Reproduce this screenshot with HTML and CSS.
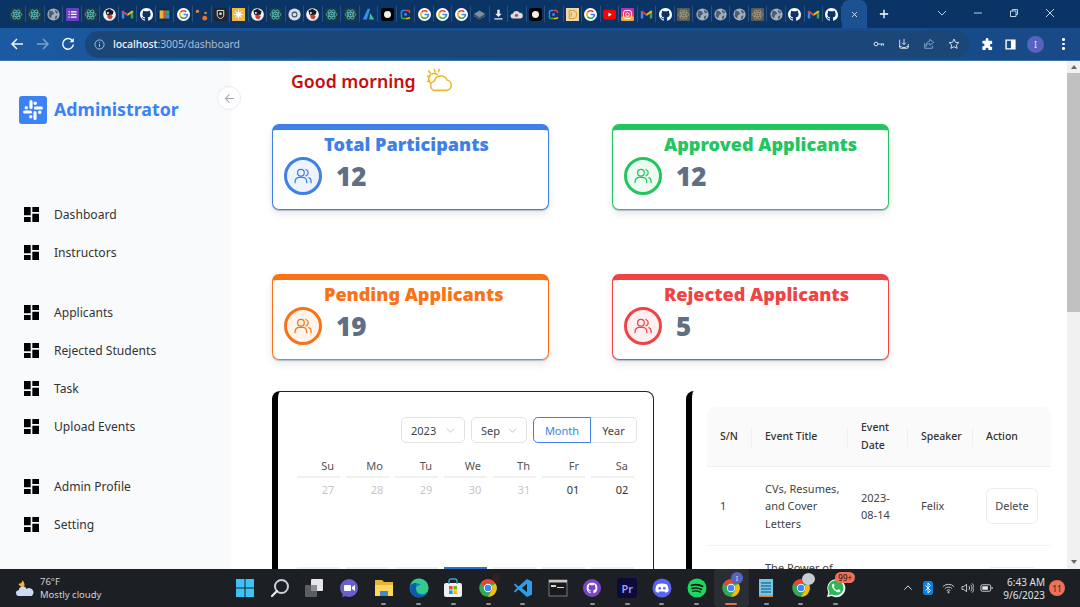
FILE: index.html
```html
<!DOCTYPE html>
<html lang="en">
<head>
<meta charset="utf-8">
<title>Dashboard</title>
<link rel="stylesheet" href="styles.css">
</head>
<body>
<svg class="defs" aria-hidden="true">
  <symbol id="react" viewBox="0 0 16 16"><rect width="16" height="16" rx="2" fill="#1d3a44"/><g fill="none" stroke="#5fc9c9" stroke-width=".9"><ellipse cx="8" cy="8" rx="6.5" ry="2.6"/><ellipse cx="8" cy="8" rx="6.5" ry="2.6" transform="rotate(60 8 8)"/><ellipse cx="8" cy="8" rx="6.5" ry="2.6" transform="rotate(120 8 8)"/></g><circle cx="8" cy="8" r="1.3" fill="#5fc9c9"/></symbol>
  <symbol id="reactg" viewBox="0 0 16 16"><rect width="16" height="16" rx="1" fill="#5b5a50"/><g fill="none" stroke="#a5a08f" stroke-width=".9"><ellipse cx="8" cy="8" rx="6.5" ry="2.6"/><ellipse cx="8" cy="8" rx="6.5" ry="2.6" transform="rotate(60 8 8)"/><ellipse cx="8" cy="8" rx="6.5" ry="2.6" transform="rotate(120 8 8)"/></g><circle cx="8" cy="8" r="1.3" fill="#a5a08f"/></symbol>
  <symbol id="globe" viewBox="0 0 16 16"><circle cx="8" cy="8" r="7.5" fill="#a6aeb8"/><path d="M3 3l4 1 2 3-3 2-1 4-3-3zM10 2l4 3-2 2-2-2zM10 10l3-1-1 4-2 1z" fill="#4a5d74"/></symbol>
  <symbol id="list" viewBox="0 0 16 16"><rect width="16" height="16" rx="1" fill="#6a3fc0"/><path d="M3 4h1.5v1.5H3zM6 4h7v1.5H6zM3 7.2h1.5v1.5H3zM6 7.2h7v1.5H6zM3 10.4h1.5v1.5H3zM6 10.4h7v1.5H6z" fill="#fff"/></symbol>
  <symbol id="manga" viewBox="0 0 16 16"><circle cx="8" cy="8" r="7.8" fill="#f4f2f0"/><path d="M3 3l5-2 5 3-1 4-4 1-4-1z" fill="#1c1a20"/><path d="M5 9l4-1 3 2-2 4-4-1z" fill="#c4453a"/><circle cx="6" cy="6" r="1.2" fill="#fff"/></symbol>
  <symbol id="gmail" viewBox="0 0 16 16"><path d="M1 13V4l3 2v7z" fill="#4285f4"/><path d="M15 13V4l-3 2v7z" fill="#34a853"/><path d="M1 4l1.500-1L8 7.200v2.500L1 5z" fill="#ea4335"/><path d="M15 4l-1.500-1L8 7.200v2.500L15 5z" fill="#fbbc05"/></symbol>
  <symbol id="github" viewBox="0 0 16 16"><path fill="#fff" d="M8 0C3.580 0 0 3.580 0 8c0 3.540 2.290 6.530 5.470 7.590.4.070.55-.17.55-.38 0-.19-.01-.82-.01-1.490-2.010.37-2.530-.49-2.690-.94-.09-.23-.48-.94-.82-1.130-.28-.15-.68-.52-.01-.53.63-.01 1.080.58 1.230.82.720 1.210 1.870.87 2.330.66.070-.52.280-.87.510-1.070-1.780-.2-3.640-.89-3.640-3.950 0-.87.310-1.590.820-2.150-.08-.2-.36-1.020.08-2.120 0 0 .67-.21 2.200.82.640-.18 1.320-.27 2-.27s1.360.09 2 .27c1.530-1.040 2.200-.82 2.200-.82.440 1.100.160 1.920.080 2.120.510.560.820 1.270.820 2.150 0 3.070-1.870 3.750-3.650 3.950.290.250.540.730.540 1.480 0 1.070-.01 1.930-.01 2.200 0 .210.150.460.550.380A8.010 8.010 0 0 0 16 8c0-4.420-3.580-8-8-8z"/></symbol>
  <symbol id="twob" viewBox="0 0 16 16"><rect width="16" height="16" rx="1" fill="#0e2f55"/><rect x="2" y="3" width="5" height="10" fill="#f2b632"/><rect x="7" y="3" width="3" height="10" fill="#e04f3c"/><rect x="10" y="3" width="4" height="5" fill="#3fa65a"/><rect x="10" y="8" width="4" height="5" fill="#3d8be0"/></symbol>
  <symbol id="google" viewBox="0 0 16 16"><circle cx="8" cy="8" r="8" fill="#fff"/><g fill="none" stroke-width="2.100"><path d="M11.500 4.700A4.800 4.800 0 0 0 4.400 5.200" stroke="#ea4335"/><path d="M4.400 5.200a4.800 4.800 0 0 0 0 5.600" stroke="#fbbc05"/><path d="M4.400 10.800a4.800 4.800 0 0 0 7.300 .3" stroke="#34a853"/><path d="M11.700 11.100A4.800 4.800 0 0 0 12.800 8H8" stroke="#4285f4"/></g></symbol>
  <symbol id="dots" viewBox="0 0 16 16"><circle cx="3" cy="4" r="2" fill="#f08a24"/><circle cx="13" cy="6" r="1.500" fill="#f08a24"/><circle cx="12" cy="12.500" r="3" fill="#f2701d"/></symbol>
  <symbol id="shield" viewBox="0 0 16 16"><rect width="16" height="16" rx="2" fill="#22262c"/><path d="M4 3h8v6c0 2-2 3.500-4 4-2-.5-4-2-4-4z" fill="none" stroke="#e8e4d8" stroke-width="1.200"/><circle cx="8" cy="7" r="1.600" fill="#e8e4d8"/></symbol>
  <symbol id="sun" viewBox="0 0 16 16"><rect width="16" height="16" fill="#f3b73b"/><circle cx="8" cy="8" r="3" fill="#fff"/><path d="M8 2v12M2 8h12M3.800 3.800l8.400 8.400M12.200 3.800l-8.400 8.400" stroke="#fff" stroke-width="1"/></symbol>
  <symbol id="chromew" viewBox="0 0 16 16"><circle cx="8" cy="8" r="7.500" fill="#d8dde2"/><circle cx="8" cy="8" r="3.600" fill="#37506e"/><circle cx="8" cy="8" r="2.300" fill="#d8dde2"/></symbol>
  <symbol id="aicon" viewBox="0 0 16 16"><path d="M7 1h3l-4 13H1z" fill="#3b8bea"/><path d="M10 6l5 8h-6z" fill="#35c6a8"/></symbol>
  <symbol id="dot" viewBox="0 0 16 16"><rect width="16" height="16" rx="3" fill="#000"/><circle cx="8" cy="8" r="4.300" fill="#f1efe8"/></symbol>
  <symbol id="lens" viewBox="0 0 16 16"><g fill="none" stroke-width="1.800"><path d="M3 8V5a2 2 0 0 1 2-2h3" stroke="#4285f4"/><path d="M8 3h3a2 2 0 0 1 2 2v1" stroke="#ea4335"/><path d="M13 11a2 2 0 0 1-2 2H8" stroke="#fbbc05"/><path d="M8 13H5a2 2 0 0 1-2-2V8" stroke="#34a853"/></g><circle cx="8" cy="8" r="1.800" fill="#4285f4"/></symbol>
  <symbol id="layer" viewBox="0 0 16 16"><path d="M8 3l7 4.500L8 12 1 7.500z" fill="#7f8c9a"/><path d="M1 8.500L8 13l7-4.500V10l-7 4-7-4z" fill="#55677c"/></symbol>
  <symbol id="down" viewBox="0 0 16 16"><path d="M6.500 2h3v5H12L8 11 4 7h2.500zM3 12.500h10V14H3z" fill="#e8edf2"/></symbol>
  <symbol id="cloud" viewBox="0 0 16 16"><path d="M4 13a3 3 0 0 1-.5-6A4.600 4.600 0 0 1 12 6a3.500 3.500 0 0 1 .5 7z" fill="#d9dde2"/><circle cx="8" cy="9" r="2" fill="#c24a4a"/></symbol>
  <symbol id="dbook" viewBox="0 0 16 16"><rect width="16" height="16" fill="#f0d9a2"/><path d="M4 3h4a5 5 0 0 1 0 10H4zM6.500 5.500V10.500" fill="none" stroke="#c89a3e" stroke-width="1.200"/></symbol>
  <symbol id="yt" viewBox="0 0 16 16"><rect y="2" width="16" height="12" rx="3" fill="#f00"/><path d="M6.500 5.500v5L11 8z" fill="#fff"/></symbol>
  <symbol id="ig" viewBox="0 0 16 16"><rect width="16" height="16" rx="2" fill="#e63a72"/><rect y="10" width="16" height="6" rx="2" fill="#f7a83c"/><rect width="16" height="5" rx="2" fill="#b52fc6"/><rect x="3" y="3" width="10" height="10" rx="3" fill="none" stroke="#fff" stroke-width="1.200"/><circle cx="8" cy="8" r="2.200" fill="none" stroke="#fff" stroke-width="1.200"/></symbol>

  <symbol id="dash" viewBox="3 3 18 18"><path d="M3 13h8V3H3v10zm0 8h8v-6H3v6zm10 0h8V11h-8v10zm0-18v6h8V3h-8z"/></symbol>
  <symbol id="users" viewBox="0 0 24 24"><g fill="none" stroke="currentColor" stroke-width="1.500" stroke-linecap="round" stroke-linejoin="round"><circle cx="9.500" cy="8" r="4"/><path d="M2.500 20v-1.500a5 5 0 0 1 5-5h4a5 5 0 0 1 5 5V20"/><path d="M15.500 4.200a4 4 0 0 1 0 7.600"/><path d="M19 14c1.700.6 2.700 2.300 2.700 4.100V20"/></g></symbol>
  <symbol id="chev" viewBox="0 0 10 10"><path d="M1 3l4 4 4-4" fill="none" stroke="currentColor" stroke-width=".9"/></symbol>

  <symbol id="t-chrome" viewBox="0 0 24 24"><circle cx="12" cy="12" r="10.500" fill="#34a853"/><path d="M12 1.500a10.500 10.500 0 0 1 9.100 5.250H12a5.250 5.250 0 0 0-4.550 2.630L2.900 6.750A10.500 10.500 0 0 1 12 1.500z" fill="#ea4335"/><path d="M21.100 6.750A10.500 10.500 0 0 1 12 22.500l4.550-7.880A5.250 5.250 0 0 0 16.550 9.400z" fill="#fbbc05"/><circle cx="12" cy="12" r="5" fill="#fff"/><circle cx="12" cy="12" r="3.900" fill="#4285f4"/></symbol>
</svg>

<div class="app">
  <header class="chrome">
    <div class="tabstrip">
      <div class="favs">
        <span class="fav"><svg><use href="#react"/></svg></span>
        <span class="fav"><svg><use href="#react"/></svg></span>
        <span class="fav"><svg><use href="#globe"/></svg></span>
        <span class="fav"><svg><use href="#list"/></svg></span>
        <span class="fav"><svg><use href="#react"/></svg></span>
        <span class="fav"><svg><use href="#manga"/></svg></span>
        <span class="fav"><svg><use href="#gmail"/></svg></span>
        <span class="fav"><svg><use href="#github"/></svg></span>
        <span class="fav"><svg><use href="#twob"/></svg></span>
        <span class="fav"><svg><use href="#google"/></svg></span>
        <span class="fav"><svg><use href="#dots"/></svg></span>
        <span class="fav"><svg><use href="#shield"/></svg></span>
        <span class="fav"><svg><use href="#sun"/></svg></span>
        <span class="fav"><svg><use href="#manga"/></svg></span>
        <span class="fav"><svg><use href="#react"/></svg></span>
        <span class="fav"><svg><use href="#chromew"/></svg></span>
        <span class="fav"><svg><use href="#manga"/></svg></span>
        <span class="fav"><svg><use href="#react"/></svg></span>
        <span class="fav"><svg><use href="#react"/></svg></span>
        <span class="fav"><svg><use href="#aicon"/></svg></span>
        <span class="fav"><svg><use href="#dot"/></svg></span>
        <span class="fav"><svg><use href="#lens"/></svg></span>
        <span class="fav"><svg><use href="#google"/></svg></span>
        <span class="fav"><svg><use href="#google"/></svg></span>
        <span class="fav"><svg><use href="#google"/></svg></span>
        <span class="fav"><svg><use href="#layer"/></svg></span>
        <span class="fav"><svg><use href="#down"/></svg></span>
        <span class="fav"><svg><use href="#cloud"/></svg></span>
        <span class="fav"><svg><use href="#dot"/></svg></span>
        <span class="fav"><svg><use href="#lens"/></svg></span>
        <span class="fav"><svg><use href="#dbook"/></svg></span>
        <span class="fav"><svg><use href="#google"/></svg></span>
        <span class="fav"><svg><use href="#yt"/></svg></span>
        <span class="fav"><svg><use href="#ig"/></svg></span>
        <span class="fav"><svg><use href="#gmail"/></svg></span>
        <span class="fav"><svg><use href="#github"/></svg></span>
        <span class="fav"><svg><use href="#reactg"/></svg></span>
        <span class="fav"><svg><use href="#globe"/></svg></span>
        <span class="fav"><svg><use href="#globe"/></svg></span>
        <span class="fav"><svg><use href="#globe"/></svg></span>
        <span class="fav"><svg><use href="#reactg"/></svg></span>
        <span class="fav"><svg><use href="#globe"/></svg></span>
        <span class="fav"><svg><use href="#github"/></svg></span>
        <span class="fav"><svg><use href="#gmail"/></svg></span>
        <span class="fav"><svg><use href="#github"/></svg></span>
      </div>
      <div class="active-tab"><svg viewBox="0 0 10 10"><path d="M1.500 1.500l7 7M8.500 1.500l-7 7"/></svg></div>
      <svg class="newtab" viewBox="0 0 12 12"><path d="M6 1v10M1 6h10"/></svg>
      <div class="winctl">
        <svg viewBox="0 0 10 10"><path d="M1 3l4 4 4-4"/></svg>
        <svg viewBox="0 0 10 10"><path d="M1 5h8"/></svg>
        <svg viewBox="0 0 10 10"><path d="M1.500 3h5.500v5.500H1.500zM3.500 3V1.500H8.500V6.500H7"/></svg>
        <svg viewBox="0 0 10 10"><path d="M1 1l8 8M9 1l-8 8"/></svg>
      </div>
    </div>
    <div class="toolbar">
      <svg class="nav-ic" viewBox="0 0 14 14"><path d="M13 7H2M7 2L2 7l5 5"/></svg>
      <svg class="nav-ic dim" viewBox="0 0 14 14"><path d="M1 7h11M7 2l5 5-5 5"/></svg>
      <svg class="nav-ic" viewBox="0 0 14 14"><path d="M11.500 4A5.300 5.300 0 1 0 12.300 7.500"/><path class="solid" d="M12.800 1v4.200H8.600z"/></svg>
      <div class="omnibox">
        <svg class="info" viewBox="0 0 12 12"><circle cx="6" cy="6" r="5"/><path d="M6 5.300v3.400M6 3.200v1"/></svg>
        <span class="url"><b>localhost</b>:3005/dashboard</span>
        <div class="omni-icons">
          <svg viewBox="0 0 14 14"><circle cx="3.500" cy="7" r="2.200"/><path d="M5.700 7H13M10 7v2.200M12.300 7v1.800"/></svg>
          <svg viewBox="0 0 14 14"><path d="M2 2v8.500a1.500 1.500 0 0 0 1.500 1.500h7a1.500 1.500 0 0 0 1.500-1.500V7M7 1v6.500M4.800 5.500L7 7.800l2.200-2.300M1.500 10H4l1 1h4l1-1h2"/></svg>
          <svg class="dimic" viewBox="0 0 14 14"><path d="M2 6v6h9V9M8 1.500l4.500 3.500L8 8.500V6.500C5.500 6.500 4 8 3.500 10 3.500 6.500 5 4 8 3.700z"/></svg>
          <svg viewBox="0 0 14 14"><path d="M7 1.300l1.700 3.700 4 .4-3 2.700.9 4L7 10.100 3.400 12.100l.9-4-3-2.700 4-.4z"/></svg>
        </div>
      </div>
      <div class="tool-icons">
        <svg class="puzzle" viewBox="0 0 14 14"><path d="M5 1.500a1.500 1.500 0 0 1 3 0V3h3a1 1 0 0 1 1 1v2.500h-1a1.500 1.500 0 0 0 0 3h1V12a1 1 0 0 1-1 1H8v-1a1.500 1.500 0 0 0-3 0v1H2.500a1 1 0 0 1-1-1V9h.8a1.500 1.500 0 0 0 0-3h-.8V4a1 1 0 0 1 1-1H5z"/></svg>
        <svg class="sidepanel" viewBox="0 0 14 14"><path fill-rule="evenodd" d="M1.500 1.500h11v11h-11zM3 3v8h4.500V3z"/></svg>
        <span class="avatar">I</span>
        <span class="kebab"><i></i><i></i><i></i></span>
      </div>
    </div>
  </header>

  <div class="page">
    <aside class="sidebar">
      <div class="brand">
        <svg class="brand-logo" viewBox="0 0 28 28"><rect width="28" height="28" rx="3" fill="#3b82f6"/><g transform="translate(14 14) scale(1.120) translate(-14 -14)"><g stroke="#fff" stroke-width="2.800" stroke-linecap="round" fill="none"><path d="M12.200 6.500v5.300M15.800 16.200v5.300M6.500 15.800h5.300M16.200 12.200h5.300"/></g><g fill="#fff"><circle cx="8" cy="12" r="1.500"/><circle cx="16" cy="8" r="1.500"/><circle cx="12" cy="20" r="1.500"/><circle cx="20" cy="16" r="1.500"/></g></g></svg>
        <span class="brand-name">Administrator</span>
        <button class="collapse"><svg viewBox="0 0 12 12"><path d="M11 6H1.500M6 1.500L1.500 6 6 10.500"/></svg></button>
      </div>
      <nav class="menu">
        <ul class="menu-group">
          <li><svg><use href="#dash"/></svg>Dashboard</li>
          <li><svg><use href="#dash"/></svg>Instructors</li>
        </ul>
        <ul class="menu-group">
          <li><svg><use href="#dash"/></svg>Applicants</li>
          <li><svg><use href="#dash"/></svg>Rejected Students</li>
          <li><svg><use href="#dash"/></svg>Task</li>
          <li><svg><use href="#dash"/></svg>Upload Events</li>
        </ul>
        <ul class="menu-group">
          <li><svg><use href="#dash"/></svg>Admin Profile</li>
          <li><svg><use href="#dash"/></svg>Setting</li>
        </ul>
      </nav>
    </aside>

    <main class="main">
      <div class="greeting">
        <span>Good morning</span>
        <svg viewBox="0 0 26 24"><g fill="none" stroke="#eab92f" stroke-width="1.500" stroke-linecap="round" stroke-linejoin="round"><path d="M10 21.500h9.500a5 5 0 0 0 .8-9.900 6.500 6.500 0 0 0-12.300 1.200 4.400 4.400 0 0 0 2 8.700z"/><path d="M4.500 14.500A5.200 5.200 0 0 1 11 6.300"/><path d="M8 1.300l.7 2.200M1.500 8h2.300M2.500 3l1.800 1.600M1.500 13l2-.8M12.800 1.500l-.8 2"/></g></svg>
      </div>

      <section class="stats">
        <article class="stat blue">
          <h2>Total Participants</h2>
          <div class="stat-row"><span class="stat-ic"><svg><use href="#users"/></svg></span><strong>12</strong></div>
        </article>
        <article class="stat green">
          <h2>Approved Applicants</h2>
          <div class="stat-row"><span class="stat-ic"><svg><use href="#users"/></svg></span><strong>12</strong></div>
        </article>
        <article class="stat orange">
          <h2>Pending Applicants</h2>
          <div class="stat-row"><span class="stat-ic"><svg><use href="#users"/></svg></span><strong>19</strong></div>
        </article>
        <article class="stat red">
          <h2>Rejected Applicants</h2>
          <div class="stat-row"><span class="stat-ic"><svg><use href="#users"/></svg></span><strong>5</strong></div>
        </article>
      </section>

      <section class="lower">
        <div class="calendar">
          <div class="cal-controls">
            <span class="select y">2023<svg><use href="#chev"/></svg></span>
            <span class="select m">Sep<svg><use href="#chev"/></svg></span>
            <span class="seg">
              <span class="seg-on">Month</span><span class="seg-off">Year</span>
            </span>
          </div>
          <div class="cal-head">
            <span>Su</span><span>Mo</span><span>Tu</span><span>We</span><span>Th</span><span>Fr</span><span>Sa</span>
          </div>
          <div class="cal-row">
            <span class="muted">27</span><span class="muted">28</span><span class="muted">29</span><span class="muted">30</span><span class="muted">31</span><span>01</span><span>02</span>
          </div>
          <div class="cal-row">
            <span></span><span></span><span></span><span class="today"></span><span></span><span></span><span></span>
          </div>
        </div>

        <div class="events">
          <table class="ev-table">
            <colgroup><col class="c1"><col class="c2"><col class="c3"><col class="c4"><col class="c5"></colgroup>
            <thead>
              <tr><th>S/N</th><th>Event Title</th><th>Event Date</th><th>Speaker</th><th>Action</th></tr>
            </thead>
            <tbody>
              <tr><td>1</td><td>CVs, Resumes, and Cover Letters</td><td>2023-08-14</td><td>Felix</td><td><button class="del">Delete</button></td></tr>
              <tr class="next-row"><td></td><td>The Power of</td><td></td><td></td><td><span class="del-top"></span></td></tr>
            </tbody>
          </table>
        </div>
      </section>
    </main>

    <div class="scrollbar">
      <svg viewBox="0 0 8 8"><path d="M4 2l3 4H1z"/></svg>
      <div class="thumb"></div>
      <svg class="sb-down" viewBox="0 0 8 8"><path d="M4 6L1 2h6z"/></svg>
    </div>
  </div>

  <footer class="taskbar">
    <div class="weather">
      <svg viewBox="0 0 24 22"><path d="M9 1c-.5 3-2 4-5 4.500 1 2 3 4 7 3.500 1-3 0-6-2-8z" fill="#f2b632"/><path d="M5 20a3.500 3.500 0 0 1-.5-7A5 5 0 0 1 14 11.500 4 4 0 0 1 20 20z" fill="#c9dcf2"/></svg>
      <div class="w-text"><span>76°F</span><span>Mostly cloudy</span></div>
    </div>
    <div class="apps">
      <span class="app-i"><svg viewBox="0 0 20 20"><path d="M1 1h8.500v8.500H1zM10.500 1H19v8.500h-8.500zM1 10.500h8.500V19H1zM10.500 10.500H19V19h-8.500z" fill="#3cc2f5"/></svg></span>
      <span class="app-i"><svg viewBox="0 0 20 20"><circle cx="11.500" cy="8.500" r="6.500" fill="none" stroke="#c9ced4" stroke-width="2"/><path d="M7 13l-5 5" stroke="#e8eaec" stroke-width="2.200" stroke-linecap="round"/></svg></span>
      <span class="app-i"><svg viewBox="0 0 20 20"><rect x="1" y="7" width="12" height="12" rx="1" fill="#5a5d61"/><rect x="7" y="1" width="12" height="12" rx="1" fill="#e6e7e8"/><rect x="7" y="7" width="6" height="6" fill="#8b8e91"/></svg></span>
      <span class="app-i"><svg viewBox="0 0 20 20"><circle cx="10" cy="10" r="9" fill="#6a5fcf"/><path d="M4 16l-1 3 4-1z" fill="#6a5fcf"/><rect x="5" y="7" width="7" height="6" rx="1" fill="#fff"/><path d="M13 9l3-2v6l-3-2z" fill="#fff"/></svg></span>
      <span class="app-i run"><svg viewBox="0 0 20 20"><path d="M1 2h7l2 2h9v3H1z" fill="#e9b23a"/><path d="M1 7h18v11H1z" fill="#fbd75b"/><rect x="6" y="13" width="8" height="5" fill="#3b8bd9"/></svg></span>
      <span class="app-i run"><svg viewBox="0 0 20 20"><circle cx="10" cy="10" r="9.500" fill="#0f7bc0"/><path d="M19.500 10c0-5-4-9.500-9.500-9.500C5 .5 2 4 1.500 7.500 4 5 9 4.500 12 7c-1 0-5 0-5 4 0 4 5 7 10 4 1.500-1 2.500-3 2.500-5z" fill="#37c88c"/><path d="M7 11c0 4 4 7 8 6.500-2 1.500-3.500 2-5 2a9.500 9.500 0 0 1-8.500-12C3 5.500 5 5 7 5z" fill="#0e5ca8"/></svg></span>
      <span class="app-i run"><svg viewBox="0 0 20 20"><rect x="1" y="5" width="18" height="14" rx="2" fill="#eef0f1"/><path d="M6 6V3a2 2 0 0 1 2-2h4a2 2 0 0 1 2 2v3" fill="none" stroke="#2ea0d8" stroke-width="1.400"/><rect x="6" y="8" width="3.600" height="3.600" fill="#f25022"/><rect x="10.400" y="8" width="3.600" height="3.600" fill="#7fba00"/><rect x="6" y="12.400" width="3.600" height="3.600" fill="#00a4ef"/><rect x="10.400" y="12.400" width="3.600" height="3.600" fill="#ffb900"/></svg></span>
      <span class="app-i run"><svg><use href="#t-chrome"/></svg><i class="blip"></i></span>
      <span class="app-i run"><svg viewBox="0 0 20 20"><path d="M14 1l5 2.500v13L14 19 5.500 11.500 2 14.500.8 13.500 4 10 .8 6.500 2 5.500l3.500 3z" fill="#2f9bea"/><path d="M14 5.800L9 10l5 4.200z" fill="#1d1f23"/></svg></span>
      <span class="app-i"><svg viewBox="0 0 20 20"><rect x="1" y="2" width="18" height="16" fill="#1a1a1a" stroke="#8b8e91" stroke-width=".8"/><rect x="1" y="2" width="18" height="2.500" fill="#c9c9c9"/><path d="M3 7h5v2H3zM9 9h7v1H9z" fill="#d8d8d8"/></svg></span>
      <span class="app-i run"><svg viewBox="0 0 20 20"><circle cx="10" cy="10" r="9" fill="#7a46c8"/><g transform="translate(4.500 4.500) scale(.69)"><use href="#github" width="16" height="16"/></g></svg></span>
      <span class="app-i run"><span class="pr">Pr</span></span>
      <span class="app-i run"><svg viewBox="0 0 20 20"><circle cx="10" cy="10" r="9.500" fill="#5865f2"/><path d="M5 6.500c3-1.300 7-1.300 10 0 1.200 2 1.700 4.500 1.500 6.700-1 .8-2 1.200-3 1.500l-.8-1.300H7.300l-.8 1.300c-1-.3-2-.7-3-1.500-.2-2.200.3-4.700 1.500-6.700z" fill="#fff"/><circle cx="7.700" cy="10.300" r="1.300" fill="#5865f2"/><circle cx="12.300" cy="10.300" r="1.300" fill="#5865f2"/></svg></span>
      <span class="app-i run"><svg viewBox="0 0 20 20"><circle cx="10" cy="10" r="9.500" fill="#1ed760"/><g fill="none" stroke="#101312" stroke-linecap="round"><path d="M4.500 7.300c3.700-1 7.700-.7 11 1.100" stroke-width="1.800"/><path d="M5 10.500c3-.8 6.500-.5 9.500 1" stroke-width="1.500"/><path d="M5.500 13.300c2.500-.6 5.500-.4 8 .8" stroke-width="1.200"/></g></svg></span>
      <span class="app-i run focus"><svg><use href="#t-chrome"/></svg><b class="pic-badge">I</b></span>
      <span class="app-i run"><svg viewBox="0 0 20 20"><rect x="3" y="1" width="14" height="18" fill="#73c6e9"/><path d="M5 5h10M5 8h10M5 11h10M5 14h10" stroke="#174a6a" stroke-width="1"/><rect x="3" y="17.500" width="14" height="1.500" fill="#d9803a"/></svg></span>
      <span class="app-i run"><svg><use href="#t-chrome"/></svg><b class="pic-b2"></b></span>
      <span class="app-i run"><svg viewBox="0 0 20 20"><path d="M1 19l1.300-4.700A9 9 0 1 1 5.800 18z" fill="#fff"/><path d="M2.700 17.200l.9-3A7.600 7.600 0 1 1 6.200 16.500z" fill="#29b856"/><path d="M7.300 5.500c-.8.300-1.600 1.500-1.300 3 .5 2.400 3.300 5 5.500 5.700 1.400.4 2.700-.3 3-1.300.2-.7-1.900-1.800-2.300-1.700-.5.200-.6 1-1.100 1-1 0-3-2-3.300-3-.1-.5.7-.7.800-1.200 0-.5-.8-2.600-1.300-2.500z" fill="#fff"/></svg><b class="wa-badge">99+</b></span>
    </div>
    <div class="tray">
      <svg class="t-chev" viewBox="0 0 12 12"><path d="M1.500 8L6 3.500 10.500 8"/></svg>
      <svg class="t-bt" viewBox="0 0 10 14"><rect width="10" height="14" rx="2.500" fill="#0a7fe0"/><path d="M2.500 4.500l5 5L5 12V2l2.500 2.500-5 5" fill="none" stroke="#fff" stroke-width=".9"/></svg>
      <svg class="t-ic" viewBox="0 0 14 12"><path d="M1 4.500a8.500 8.500 0 0 1 12 0M3 6.700a5.700 5.700 0 0 1 8 0M5 8.800a2.800 2.800 0 0 1 4 0"/><circle cx="7" cy="10.500" r=".8"/></svg>
      <svg class="t-ic" viewBox="0 0 14 12"><path d="M1 4.500v3h2L6 10V2L3 4.500zM8.500 4a3 3 0 0 1 0 4M10.500 2.500a5 5 0 0 1 0 7M12 1a7 7 0 0 1 0 10"/></svg>
      <svg class="t-ic" viewBox="0 0 14 12"><rect x="1" y="2.500" width="10.500" height="7" rx="1.500"/><path class="fillw" d="M2.500 4h6v4h-6zM12.500 5h1v2h-1z"/></svg>
      <div class="clock"><span>6:43 AM</span><span>9/6/2023</span></div>
      <span class="notif">11</span>
    </div>
  </footer>
</div>
</body>
</html>
```
FILE: styles.css
```css
* { box-sizing: border-box; }
html, body { margin: 0; height: 100%; overflow: hidden; }
body { font-family: "Noto Sans", "Open Sans", sans-serif; background: #fff; color: #222; }
.defs { display: none; }
.app { width: 1080px; height: 607px; display: flex; flex-direction: column; overflow: hidden; }

/* browser chrome */
.chrome { flex: none; height: 61px; display: flex; flex-direction: column; border-bottom: 1px solid #4174ab; }
.tabstrip { height: 28px; background: #0b3466; display: flex; align-items: stretch; padding-left: 7.7px; }
.favs { display: flex; width: 834.500px; flex: none; align-items: center; }
.fav { width: 18.545px; height: 16px; flex: none; display: flex; align-items: center; justify-content: center; border-right: 1px solid #2a507d; }
.fav svg { width: 13px; height: 13px; display: block; }
.active-tab { width: 25px; background: #1a5294; border-radius: 7px 7px 0 0; display: flex; align-items: center; justify-content: center; }
.active-tab svg { width: 7px; height: 7px; fill: none; stroke: #e4ecf5; stroke-width: 1.300; }
.newtab { width: 10px; height: 10px; margin: 9px 0 0 12px; fill: none; stroke: #fff; stroke-width: 1.600; }
.winctl { margin-left: 48px; display: flex; gap: 26px; padding-top: 8px; }
.winctl svg { width: 10px; height: 10px; fill: none; stroke: #d6e0ec; stroke-width: .9; }
.toolbar { flex: 1; background: linear-gradient(90deg, #1b5aa2, #174f90 30%, #174a87); display: flex; align-items: center; padding: 0 0 0 10px; }
.nav-ic { width: 14px; height: 14px; fill: none; stroke: #f2f5f9; stroke-width: 1.500; margin-right: 11.500px; flex: none; }
.nav-ic.dim { stroke: #7da0c9; }
.nav-ic .solid { fill: #f2f5f9; stroke: none; }
.omnibox { width: 884px; height: 27px; margin-left: -1.500px; background: #1b4678; border-radius: 14px; display: flex; align-items: center; padding: 0 9px 0 9px; flex: none; }
.info { width: 11px; height: 11px; fill: none; stroke: #b8c7da; stroke-width: 1; flex: none; }
.url { margin-left: 8px; font-size: 10.500px; color: #a9bcd2; letter-spacing: -.1px; }
.url b { font-weight: 500; color: #f1f4f8; }
.omni-icons { margin-left: auto; display: flex; gap: 13px; align-items: center; }
.omni-icons svg { width: 12px; height: 12px; fill: none; stroke: #dce5ef; stroke-width: 1.100; }
.omni-icons .dimic { stroke: #8aa5c4; }
.tool-icons { display: flex; align-items: center; margin-left: 12px; gap: 9px; }
.puzzle { width: 13px; height: 13px; fill: #fff; }
.sidepanel { width: 13px; height: 13px; fill: #fff; margin-left: 1px; }
.avatar { width: 17px; height: 17px; border-radius: 50%; background: #5a62bf; color: #dfe3f5; font-size: 9px; display: flex; align-items: center; justify-content: center; margin-left: 1px; }
.kebab { display: flex; flex-direction: column; gap: 2px; margin-left: 9px; }
.kebab i { width: 2.500px; height: 2.500px; background: #fff; border-radius: 50%; display: block; }

/* page */
.page { flex: 1; min-height: 0; display: flex; overflow: hidden; }
.sidebar { flex: none; width: 229px; background: #f9fafb; box-shadow: 2px 0 4px rgba(0, 0, 0, .025); position: relative; padding-top: 35px; }
.brand { display: flex; align-items: center; height: 28px; padding-left: 19px; gap: 7px; }
.brand-logo { width: 28px; height: 28px; flex: none; }
.brand-name { font-size: 17.800px; font-weight: 700; color: #3b82f6; white-space: nowrap; margin-top: -2px; }
.collapse { position: absolute; top: 25px; right: -12px; width: 24px; height: 24px; border-radius: 50%; background: #fff; border: 1px solid #e8eaee; padding: 0; display: flex; align-items: center; justify-content: center; z-index: 2; }
.collapse svg { width: 11px; height: 11px; fill: none; stroke: #a2aab5; stroke-width: 1.200; }
.menu { margin-top: 71px; display: flex; flex-direction: column; gap: 22px; }
.menu-group { list-style: none; margin: 0; padding: 0; }
.menu-group li { height: 38px; display: flex; align-items: center; padding-left: 24px; font-size: 12.100px; color: #333; white-space: nowrap; }
.menu-group svg { width: 15px; height: 15px; margin-right: 15px; fill: #000; flex: none; }

.main { flex: 1; min-width: 0; overflow: hidden; padding: 7px 0 0 43px; }
.greeting { display: flex; align-items: center; gap: 10px; height: 26px; padding-left: 19px; color: #c40d0d; font-size: 17.700px; font-weight: 600; }
.greeting svg { width: 27px; height: 25px; margin-top: -1px; }
.stats { margin-top: 30px; display: grid; grid-template-columns: 277px 277px; column-gap: 63px; row-gap: 64px; }
.stat { height: 86px; border: 1px solid currentColor; border-top-width: 6px; border-radius: 7px; box-shadow: 0 1px 1px rgba(70, 100, 170, .35), 0 4px 8px rgba(0, 0, 0, .09); padding: 2px 0 0 11px; }
.stat h2 { margin: 0 0 0 40px; font-size: 18.100px; line-height: 24px; font-weight: 900; white-space: nowrap; }
.stat-row { display: flex; align-items: center; gap: 14px; margin-top: 1px; }
.stat-ic { width: 38px; height: 38px; border-radius: 50%; border: 3px solid currentColor; display: flex; align-items: center; justify-content: center; flex: none; }
.stat-ic svg { width: 20px; height: 20px; }
.stat strong { color: #5f6f85; font-size: 26px; font-weight: 900; line-height: 38px; }
.blue { color: #3f7fe8; }
.blue .stat-ic { background: #eef4fd; }
.green { color: #22c55e; }
.green .stat-ic { background: #eefbf3; }
.orange { color: #f97316; }
.orange .stat-ic { background: #fef4ec; }
.red { color: #ef4444; }
.red .stat-ic { background: #fdf0f0; }

.lower { margin-top: 31px; display: flex; gap: 32px; align-items: flex-start; }
.calendar { width: 382px; height: 300px; flex: none; border: 1px solid #222; border-left: 6px solid #000; border-radius: 8px; padding: 25px 16px 0 16px; }
.cal-controls { display: flex; justify-content: flex-end; gap: 6px; font-size: 11px; color: #444; height: 26px; }
.select { border: 1px solid #e2e2e2; border-radius: 5px; display: flex; align-items: center; padding-left: 9px; position: relative; }
.select svg { position: absolute; right: 9px; top: 8px; width: 9px; height: 9px; color: #bcbcbc; }
.select.y { width: 64px; }
.select.m { width: 56px; }
.seg { display: flex; }
.seg-on { width: 58px; border: 1px solid #3f7fe8; color: #3f7fe8; border-radius: 5px 0 0 5px; display: flex; align-items: center; justify-content: center; }
.seg-off { width: 46px; border: 1px solid #e2e2e2; border-left: 0; border-radius: 0 5px 5px 0; display: flex; align-items: center; justify-content: center; }
.cal-head, .cal-row { display: grid; grid-template-columns: repeat(7, 49px); font-size: 11px; text-align: right; }
.cal-head { margin-top: 14px; height: 19px; color: #555; }
.cal-head span { padding-right: 9px; line-height: 17px; }
.cal-row { color: #333; }
.cal-row span { margin: 0 2.700px; height: 91px; border-top: 2px solid #f0f0f0; padding: 4px 6px 0 0; line-height: 16px; }
.cal-row .muted { color: #c6c6c6; }
.cal-row .today { border-top-color: #2f6fd0; }

.events { flex: none; width: 380px; height: 300px; border-left: 6px solid #000; border-radius: 8px 0 0 8px; padding: 16px 0 0 15px; }
.ev-table { width: 344px; table-layout: fixed; border-collapse: separate; border-spacing: 0; font-size: 11px; line-height: 17.300px; color: #444; }
.c1 { width: 45px; }
.c2 { width: 96px; }
.c3 { width: 60px; }
.c4 { width: 65px; }
.c5 { width: 78px; }
.ev-table th { background: #fafafa; height: 60px; padding: 0 10px 0 13px; text-align: left; font-size: 10.500px; font-weight: 500; color: #333; border-bottom: 1px solid #f0f0f0; position: relative; }
.ev-table th:first-child { border-top-left-radius: 8px; }
.ev-table th:last-child { border-top-right-radius: 8px; }
.ev-table th:not(:last-child)::after { content: ""; position: absolute; right: 0; top: 20px; height: 20px; width: 1px; background: #f0f0f0; }
.ev-table td { padding: 13px 5px 13px 13px; border-bottom: 1px solid #f2f2f2; height: 78px; }
.next-row td { vertical-align: top; }
.del { width: 52px; height: 36px; background: #fff; border: 1px solid #eee; border-radius: 6px; padding: 0; font: inherit; color: #444; }
.del-top { display: block; width: 52px; height: 36px; margin-top: 8px; border: 1px solid #eee; border-radius: 6px; }

.scrollbar { flex: none; width: 13px; background: #f1f1f1; display: flex; flex-direction: column; align-items: center; }
.scrollbar svg { width: 8px; height: 8px; fill: #666; flex: none; margin-top: 2px; }
.thumb { width: 13px; height: 239px; background: #c1c1c1; margin-top: 2px; flex: none; }
.sb-down { margin-top: auto !important; margin-bottom: 3px; }

/* taskbar */
.taskbar { flex: none; height: 38px; background: #1c2025; display: flex; align-items: center; color: #e6e8ea; position: relative; z-index: 3; }
.weather { width: 227.600px; flex: none; display: flex; align-items: center; padding-left: 15px; gap: 5px; }
.weather svg { width: 20px; height: 19px; flex: none; }
.w-text { display: flex; flex-direction: column; font-size: 9.500px; line-height: 13px; color: #cfd2d5; }
.apps { display: flex; flex: none; height: 38px; }
.app-i { width: 34.760px; height: 38px; display: flex; align-items: center; justify-content: center; position: relative; flex: none; }
.app-i svg { width: 20px; height: 20px; display: block; }
.app-i.run::after { content: ""; position: absolute; bottom: 2px; left: 50%; width: 5px; height: 2px; margin-left: -2.500px; background: #8b9096; border-radius: 1px; }
.app-i.focus { background: #2a2e33; border-radius: 4px; }
.app-i.focus::after { width: 12px; margin-left: -6px; background: #e0714e; }
.pr { width: 20px; height: 20px; background: #0d0a3a; color: #9b9bff; border-radius: 3px; font-size: 11px; font-weight: 600; display: flex; align-items: center; justify-content: center; }
.blip { position: absolute; top: 4px; right: 6px; width: 8px; height: 9px; background: #2d2320; border-radius: 50%; }
.pic-badge { position: absolute; top: 3px; right: 6px; width: 12px; height: 12px; border-radius: 50%; background: #5a62bf; color: #e3e6f7; font-size: 7px; font-weight: 400; display: flex; align-items: center; justify-content: center; }
.pic-b2 { position: absolute; top: 4px; right: 3px; width: 13px; height: 12px; border-radius: 50%; background: #c8ccd1; }
.wa-badge { position: absolute; top: 3px; left: 17px; height: 11px; padding: 0 3px; border-radius: 6px; background: #ec7258; color: #3a1a12; font-size: 8px; line-height: 11px; font-weight: 500; }
.tray { margin-left: auto; display: flex; align-items: center; padding-right: 15px; }
.tray svg { flex: none; }
.t-chev { width: 10px; height: 10px; fill: none; stroke: #e6e8ea; stroke-width: 1.100; margin-right: 10px; }
.t-bt { width: 10px; height: 14px; margin-right: 9.500px; }
.t-ic { width: 13px; height: 12px; fill: none; stroke: #e6e8ea; stroke-width: .9; margin-right: 6px; }
.t-ic .fillw { fill: #e6e8ea; stroke: none; }
.clock { width: 46px; display: flex; flex-direction: column; align-items: flex-end; gap: 1px; font-size: 10px; line-height: 12px; color: #dfe1e3; }
.notif { width: 16px; height: 16px; margin-left: 4px; border-radius: 50%; background: #ec7258; color: #3a1a12; font-size: 8.500px; display: flex; align-items: center; justify-content: center; }
```
